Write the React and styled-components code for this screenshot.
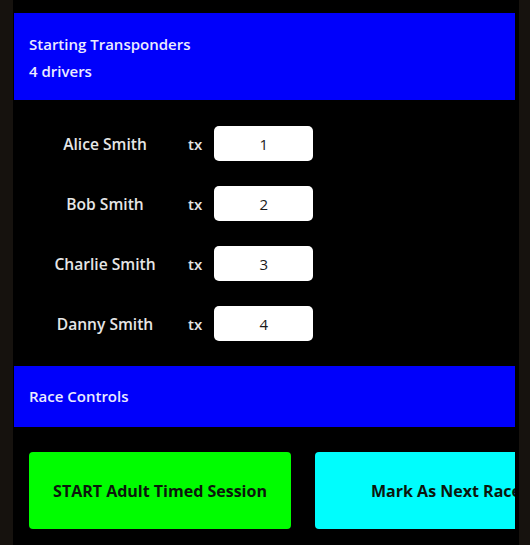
import React from 'react';
import styled, { createGlobalStyle } from 'styled-components';

const GlobalStyle = createGlobalStyle`
  html, body {
    margin: 0;
    padding: 0;
    background: #16120e;
    font-family: "Open Sans", "Noto Sans", sans-serif;
    overflow: hidden;
  }
`;

const drivers = [
  { name: 'Alice Smith', tx: 1 },
  { name: 'Bob Smith', tx: 2 },
  { name: 'Charlie Smith', tx: 3 },
  { name: 'Danny Smith', tx: 4 },
];

// black panel sitting inside the dark frame
const Panel = styled.div`
  margin-left: 13px;
  width: 501px;
  height: 545px;
  background: #000;
  border-left: 1px solid #000;
  border-right: 4px solid #000;
  padding-top: 13px;
  box-sizing: content-box;
  overflow: hidden;
`;

const SectionHeader = styled.div`
  background: #0000fb;
  color: #ececff;
  font-size: 15px;
  font-weight: 600;
  line-height: 27px;
  padding: ${(p) => (p.$tall ? '18px 15px 15px' : '17px 15px 17px')};
`;

const DriverList = styled.div`
  display: flex;
  flex-direction: column;
  gap: 25px;
  padding: 26px 0 25px 16px;
`;

const DriverRow = styled.div`
  display: flex;
  align-items: center;
  height: 35px;
`;

const DriverName = styled.span`
  width: 150px;
  text-align: center;
  color: #e6e6e6;
  font-size: 15.6px;
  font-weight: 600;
`;

const TxLabel = styled.span`
  margin-left: 8px;
  color: #e6e6e6;
  font-size: 15px;
  font-weight: 600;
`;

const TxInput = styled.input`
  margin-left: 12px;
  width: 99px;
  height: 35px;
  box-sizing: border-box;
  border: none;
  border-radius: 5px;
  background: #fff;
  color: #1a1a1a;
  font-family: "Open Sans", "Noto Sans", sans-serif;
  font-size: 15px;
  text-align: center;
  outline: none;
`;

const ButtonRow = styled.div`
  display: flex;
  gap: 24px;
  padding: 25px 0 0 15px;
`;

const ControlButton = styled.button`
  flex: 0 0 262px;
  height: 77px;
  border: none;
  border-radius: 4px;
  background: ${(p) => p.$color};
  color: #0c160c;
  font-family: "Open Sans", "Noto Sans", sans-serif;
  font-size: 16px;
  font-weight: 700;
  white-space: nowrap;
`;

export default function App() {
  return (
    <>
      <GlobalStyle />
      <Panel>
        <SectionHeader $tall>
          <div>Starting Transponders</div>
          <div>{drivers.length} drivers</div>
        </SectionHeader>
        <DriverList>
          {drivers.map((d) => (
            <DriverRow key={d.name}>
              <DriverName>{d.name}</DriverName>
              <TxLabel>tx</TxLabel>
              <TxInput defaultValue={d.tx} />
            </DriverRow>
          ))}
        </DriverList>
        <SectionHeader>Race Controls</SectionHeader>
        <ButtonRow>
          <ControlButton $color="#00fd00">START Adult Timed Session</ControlButton>
          <ControlButton $color="#00fdfd">Mark As Next Race</ControlButton>
        </ButtonRow>
      </Panel>
    </>
  );
}
